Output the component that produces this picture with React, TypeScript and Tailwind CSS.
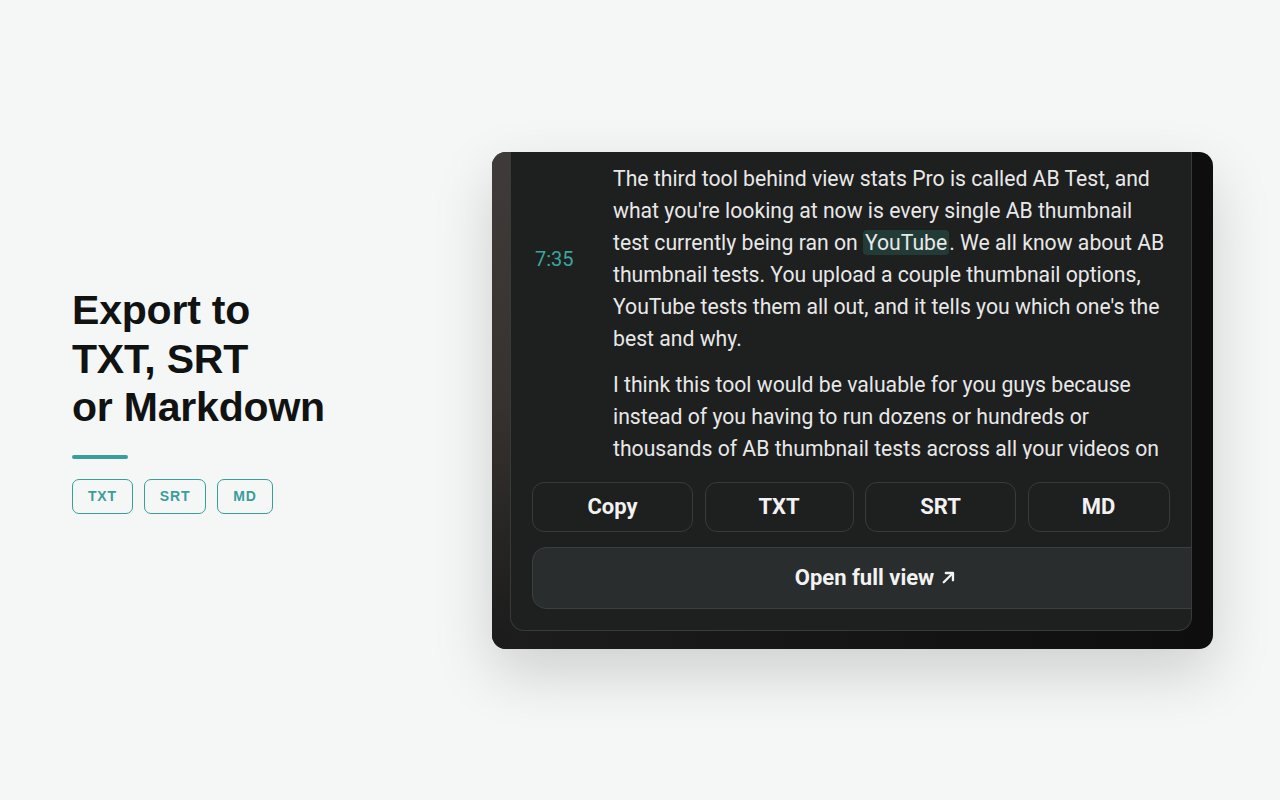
import React from 'react';

const tags = ['TXT', 'SRT', 'MD'];

const exportButtons = [
  { label: 'Copy', w: 'w-[161px]' },
  { label: 'TXT', w: 'w-[149px]' },
  { label: 'SRT', w: 'w-[151px]' },
  { label: 'MD', w: 'w-[142px]' },
];

const App: React.FC = () => {
  return (
    <div className="h-screen w-full bg-[#f5f6f6] flex items-center overflow-hidden">
      {/* LEFT: HEADLINE */}
      <div className="w-[492px] pl-[72px] shrink-0" style={{ fontFamily: '"Liberation Sans", Arial, sans-serif' }}>
        <h1 className="text-[41px] leading-[48.5px] font-bold text-[#111313] tracking-[-0.2px]">
          Export to
          <br />
          TXT, SRT
          <br />
          or Markdown
        </h1>
        <div className="mt-[23px] h-[4px] w-[56px] rounded-full bg-[#3a9e9b]" />
        <div className="mt-[20px] flex gap-[11px]">
          {tags.map((t) => (
            <span
              key={t}
              className="h-[35px] px-[15px] flex items-center justify-center rounded-[7px] border border-[#3a9e9b] text-[#3a9e9b] text-[14px] font-bold tracking-[0.8px]"
            >
              {t}
            </span>
          ))}
        </div>
      </div>

      {/* RIGHT: TRANSCRIPT CARD */}
      <div
        className="w-[721px] h-[497px] shrink-0 rounded-[14px] overflow-hidden flex bg-gradient-to-r from-[#1d1d1d] to-[#0e0e0e] shadow-[0_24px_60px_rgba(0,0,0,0.16)]"
        style={{ fontFamily: 'Roboto, "Noto Sans", sans-serif' }}
      >
        <div className="w-[18px] shrink-0 bg-gradient-to-b from-[#3f3b3a] via-[#36322f] to-[#1b1b1b]" />

        <div className="w-[682px] shrink-0">
          <div className="h-[479px] bg-[#1e1f1f] border-x border-b border-[#393b3b] rounded-b-[14px] overflow-hidden flex flex-col">
            {/* transcript */}
            <div className="h-[307px] shrink-0 overflow-hidden pt-[11px]">
              <div className="flex items-center">
                <div className="w-[102px] shrink-0 pl-[24px] text-[20px] text-[#3aa69e]">7:35</div>
                <p className="w-[560px] text-[21.2px] leading-[32px] text-[#e8e8e8]">
                  The third tool behind view stats Pro is called AB Test, and what you're looking at now is every
                  single AB thumbnail test currently being ran on{' '}
                  <span className="bg-[#223b37] rounded-[4px] px-[2px]">YouTube</span>. We all know about AB
                  thumbnail tests. You upload a couple thumbnail options, YouTube tests them all out, and it tells you
                  which one's the best and why.
                </p>
              </div>
              <div className="flex items-center mt-[14px]">
                <div className="w-[102px] shrink-0" />
                <p className="w-[560px] text-[21.2px] leading-[32px] text-[#e8e8e8]">
                  I think this tool would be valuable for you guys because instead of you having to run dozens or
                  hundreds or thousands of AB thumbnail tests across all your videos on YouTube, you can just come here
                  and see what's already working.
                </p>
              </div>
            </div>

            {/* export buttons */}
            <div className="mt-[23px] pl-[21px] flex gap-[11.5px]">
              {exportButtons.map((b) => (
                <button
                  key={b.label}
                  className={`${b.w} h-[50px] shrink-0 rounded-[12px] border border-[#393b3b] bg-[#1e1f1f] text-[22px] font-bold text-[#f2f2f2]`}
                >
                  {b.label}
                </button>
              ))}
            </div>

            <div className="mt-[15px] pl-[21px]">
              <button className="w-[688px] h-[62px] shrink-0 rounded-[14px] border border-[#3a3f3f] bg-[#292d2d] text-[22px] font-bold text-[#f2f2f2] flex items-center justify-center gap-[6px]">
                Open full view
                <svg width="17" height="17" viewBox="0 0 16 16" fill="none" stroke="currentColor" strokeWidth="2.2" strokeLinecap="round" strokeLinejoin="round">
                  <path d="M3.5 12.5 12 4" />
                  <path d="M5.5 3.8h6.7v6.7" />
                </svg>
              </button>
            </div>
          </div>
        </div>
      </div>
    </div>
  );
};

export default App;
